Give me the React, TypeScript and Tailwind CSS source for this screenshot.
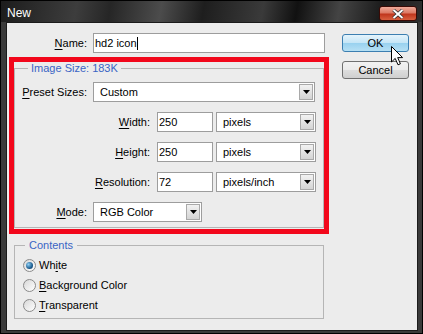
import React from 'react';

const font = { fontFamily: '"Liberation Sans", Arial, sans-serif' };

const Mn = ({ text, at }: { text: string; at: number }) => (
  <>
    {text.slice(0, at)}
    <span className="underline underline-offset-2">{text[at]}</span>
    {text.slice(at + 1)}
  </>
);

const DropArrow = () => (
  <div className="w-[14px] h-[16px] mr-px border border-[#a9a9a9] bg-[linear-gradient(#f2f2f2,#d4d4d4)] flex items-center justify-center">
    <svg width="7" height="4" viewBox="0 0 7 4">
      <path d="M0 0 H7 L3.5 4 Z" fill="#000" />
    </svg>
  </div>
);

const Select = ({ w, text }: { w: string; text: string }) => (
  <div className={`${w} h-[20px] bg-white border border-[#9d9d9d] flex items-center`}>
    <span className="flex-1 pl-[6px]">{text}</span>
    <DropArrow />
  </div>
);

const Field = ({ w, text, caret }: { w: string; text: string; caret?: boolean }) => (
  <div className={`${w} h-[20px] bg-white border border-[#9d9d9d] flex items-center pl-[1px]`}>
    <span>{text}</span>
    {caret && <span className="w-px h-[13px] bg-black" />}
  </div>
);

const Radio = ({ checked, label }: { checked?: boolean; label: React.ReactNode }) => (
  <div className="h-[20px] flex items-center pl-[8px]">
    <div className="w-[13px] h-[13px] rounded-full border border-[#8a8a8a] bg-[linear-gradient(135deg,#d8d8d8,#ffffff)] flex items-center justify-center">
      {checked && <div className="w-[7px] h-[7px] rounded-full bg-[radial-gradient(circle_at_35%_35%,#8fd0f5,#1f5f92_60%,#0b2f55)]" />}
    </div>
    <span className="ml-[3px]">{label}</span>
  </div>
);

const Button = ({ children, primary }: { children: React.ReactNode; primary?: boolean }) => (
  <div
    className={`w-[67px] h-[18px] rounded-[3px] border flex items-center justify-center text-[11px] ${
      primary
        ? 'border-[#3c7fb1] bg-[linear-gradient(#e5f4fc_0%,#c4e5f6_50%,#98d1ef_51%,#b6e0f4_100%)]'
        : 'border-[#707070] bg-[linear-gradient(#f2f2f2_0%,#ebebeb_50%,#dddddd_51%,#cfcfcf_100%)]'
    }`}
  >
    {children}
  </div>
);

export default function App() {
  return (
    <div
      className="w-[423px] h-[334px] relative flex flex-col bg-[#3a3a3a] border border-black text-[11px] text-black leading-none"
      style={font}
    >
      {/* title bar */}
      <div className="h-[21px] flex items-start bg-[linear-gradient(100deg,#1c1c1c_0%,#3d3d3d_18%,#262626_26%,#4c4c4c_38%,#1e1e1e_48%,#3a3a3a_62%,#111_70%,#444_80%,#1b1b1b_90%,#2e2e2e_100%)]">
        <span className="pl-[6px] pt-[6px] text-white text-[12px]">New</span>
        <div className="ml-auto mr-[5px] mt-[5px] w-[38px] h-[15px] rounded-[3px] border border-[#3a0a05] bg-[linear-gradient(#eeaa9a_0%,#dc7a64_45%,#c0361d_55%,#d8603f_100%)] flex items-center justify-center">
          <svg width="12" height="10" viewBox="0 0 12 10">
            <path d="M1.5 1 L10.5 9 M10.5 1 L1.5 9" stroke="#2a2a2a" strokeWidth="3.4" />
            <path d="M1.5 1 L10.5 9 M10.5 1 L1.5 9" stroke="#fff" strokeWidth="2" />
          </svg>
        </div>
      </div>

      {/* client area */}
      <div className="ml-[5px] mr-[4px] mb-[2px] flex-1 border border-[#1b1b1b] bg-[#ececec] flex">
        <div className="pl-[2px] pt-[10px] flex flex-col">
          <div className="h-[20px] flex items-center">
            <span className="w-[78px] text-right">
              <Mn text="Name:" at={0} />
            </span>
            <div className="ml-[6px]">
              <Field w="w-[232px]" text="hd2 icon" caret />
            </div>
          </div>

          <div className="mt-[4px] w-[320px] h-[177px] border-[5px] border-[#f2071b]">
            <fieldset className="w-[310px] h-[166px] border border-[#b5b5b5]">
              <legend className="ml-[13px] px-[3px] leading-[13px] text-[#3a64c4]">Image Size: 183K</legend>
              <div className="mt-[7px] flex flex-col gap-[10px]">
                <div className="h-[20px] flex items-center">
                  <span className="w-[72px] text-right">
                    <Mn text="Preset Sizes:" at={0} />
                  </span>
                  <div className="ml-[6px]">
                    <Select w="w-[222px]" text="Custom" />
                  </div>
                </div>
                {[
                  ['Width:', '250', 'pixels'],
                  ['Height:', '250', 'pixels'],
                  ['Resolution:', '72', 'pixels/inch'],
                ].map(([l, v, u]) => (
                  <div key={l} className="h-[20px] flex items-center">
                    <span className="w-[135px] text-right">
                      <Mn text={l} at={0} />
                    </span>
                    <div className="ml-[7px]">
                      <Field w="w-[56px]" text={v} />
                    </div>
                    <div className="ml-[3px]">
                      <Select w="w-[100px]" text={u} />
                    </div>
                  </div>
                ))}
                <div className="h-[20px] flex items-center">
                  <span className="w-[72px] text-right">
                    <Mn text="Mode:" at={0} />
                  </span>
                  <div className="ml-[6px]">
                    <Select w="w-[109px]" text="RGB Color" />
                  </div>
                </div>
              </div>
            </fieldset>
          </div>

          <fieldset className="mt-[5px] ml-[5px] w-[310px] h-[80px] border border-[#b5b5b5]">
            <legend className="ml-[10px] px-[4px] leading-[13px] text-[#3a64c4]">Contents</legend>
            <div className="pt-[3px] flex flex-col">
              <Radio checked label={<Mn text="White" at={2} />} />
              <Radio label={<Mn text="Background Color" at={0} />} />
              <Radio label={<Mn text="Transparent" at={0} />} />
            </div>
          </fieldset>
        </div>

        <div className="ml-[13px] pt-[11px] flex flex-col gap-[9px]">
          <Button primary>OK</Button>
          <Button>Cancel</Button>
        </div>
      </div>

      {/* mouse pointer */}
      <svg className="absolute left-[390px] top-[45px]" width="13" height="20" viewBox="0 0 13 20">
        <path
          d="M0.5 0.5 L0.5 16 L4.2 12.4 L7 18.8 L9.4 17.8 L6.7 11.6 L11.6 11.6 Z"
          fill="#fff"
          stroke="#000"
          strokeWidth="1"
          strokeLinejoin="round"
        />
      </svg>
    </div>
  );
}
